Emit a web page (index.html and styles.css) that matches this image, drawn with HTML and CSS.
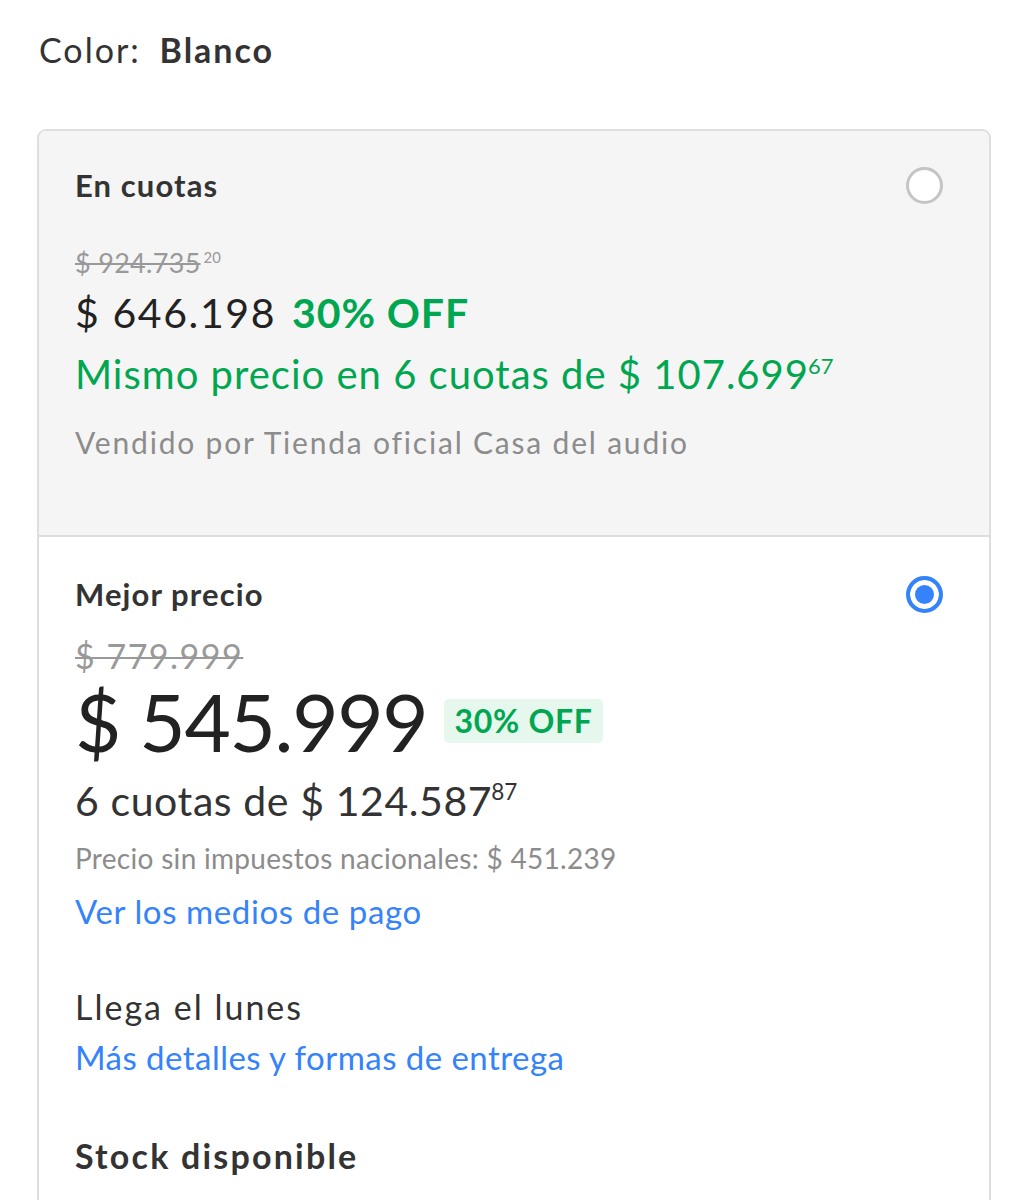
FILE: index.html
```html
<!DOCTYPE html>
<html lang="es">
  <head>
    <meta charset="UTF-8" />
    <meta name="viewport" content="width=device-width, initial-scale=1.0" />
    <title>Opciones de compra</title>
    <link rel="stylesheet" href="styles.css">
  </head>
  <body>
    <div class="page">
      <p class="color-line">Color: <strong>Blanco</strong></p>

      <div class="offers">
        <div class="offer offer-alt">
          <div class="offer-head">
            <h3>En cuotas</h3>
            <span class="radio"></span>
          </div>
          <p class="old-price small">
            <s>$ 924.735</s><sup>20</sup>
          </p>
          <p class="price-mid">
            $ 646.198<span class="off">30% OFF</span>
          </p>
          <p class="same-price">
            Mismo precio en 6 cuotas de $ 107.699<sup>67</sup>
          </p>
          <p class="seller">Vendido por Tienda oficial Casa del audio</p>
        </div>

        <div class="offer">
          <div class="offer-head">
            <h3>Mejor precio</h3>
            <span class="radio checked"></span>
          </div>
          <p class="old-price"><s>$ 779.999</s></p>
          <div class="price-big">
            <span class="amount">$ 545.999</span>
            <span class="badge">30% OFF</span>
          </div>
          <p class="installments">6 cuotas de $ 124.587<sup>87</sup></p>
          <p class="no-tax">Precio sin impuestos nacionales: $ 451.239</p>
          <a class="link" href="#">Ver los medios de pago</a>

          <div class="shipping">
            <p class="arrives">Llega el lunes</p>
            <a class="link link-wide" href="#">Más detalles y formas de entrega</a>
          </div>

          <h3 class="stock">Stock disponible</h3>
        </div>
      </div>
    </div>
  </body>
</html>
```

FILE: styles.css
```css
html {
  background-color: #ffffff;
  font-family: "Lato", "Noto Sans", sans-serif;
  color: #333333;
}

body {
  margin: 0;
  padding: 0;
  height: 1200px;
  overflow: hidden;
}

.page {
  padding: 22px 37px 0 37px;
}

p {
  margin: 0;
}

.color-line {
  font-size: 34px;
  line-height: 56px;
  letter-spacing: 2px;
  padding-left: 2px;
  color: #333333;
}

.color-line strong {
  font-weight: 700;
  margin-left: 8px;
}

.offers {
  margin-top: 51px;
  border: 2px solid #dedede;
  border-radius: 9px;
  overflow: hidden;
}

.offer {
  padding: 37px 46px 120px 36px;
  background-color: #ffffff;
}

.offer-alt {
  background-color: #f5f5f5;
  border-bottom: 2px solid #dedede;
  padding-top: 34px;
  padding-bottom: 48px;
  height: 322px;
}

.offer-head {
  display: flex;
  justify-content: space-between;
  align-items: center;
  height: 40px;
}

h3 {
  margin: 0;
  font-size: 31px;
  font-weight: 700;
  letter-spacing: 1.1px;
  color: #333333;
}

.radio {
  width: 31px;
  height: 31px;
  border: 3px solid #c4c4c4;
  border-radius: 50%;
  background-color: #ffffff;
}

.radio.checked {
  width: 29px;
  height: 29px;
  border: 4px solid #3483fa;
  background-color: #3483fa;
  box-shadow: inset 0 0 0 5px #ffffff;
}

.old-price {
  color: #999999;
  font-size: 34px;
  line-height: 40px;
  letter-spacing: 1.5px;
  margin-top: 22px;
}

.old-price.small {
  font-size: 27px;
  line-height: 36px;
  letter-spacing: 0.3px;
  margin-top: 40px;
}

.old-price s {
  text-decoration-thickness: 2px;
}

sup {
  font-size: 0.55em;
  vertical-align: 0.7em;
  line-height: 0;
  letter-spacing: 0;
  margin-left: -1px;
}

.old-price.small sup {
  margin-left: 3px;
}

.price-mid {
  font-size: 41px;
  line-height: 52px;
  letter-spacing: 1.6px;
  color: #222222;
  margin-top: 6px;
}

.off {
  color: #00a650;
  font-weight: 700;
  letter-spacing: 0.9px;
  margin-left: 16px;
}

.same-price {
  font-size: 40px;
  line-height: 52px;
  letter-spacing: 1px;
  color: #00a650;
  margin-top: 9px;
}

.seller {
  font-size: 30px;
  line-height: 40px;
  letter-spacing: 1.8px;
  color: #8c8c8c;
  margin-top: 22px;
}

.price-big {
  display: flex;
  align-items: center;
  gap: 17px;
  line-height: 82px;
  margin-top: 4px;
  color: #222222;
}

.amount {
  font-size: 80px;
  letter-spacing: -1.3px;
}

.badge {
  background-color: #e6f7ee;
  color: #00a650;
  font-size: 32px;
  font-weight: 700;
  letter-spacing: 0.7px;
  line-height: 44px;
  padding: 0 10px;
  border-radius: 5px;
}

.installments {
  font-size: 41px;
  line-height: 52px;
  letter-spacing: 0.6px;
  color: #333333;
  margin-top: 13px;
}

.no-tax {
  font-size: 28px;
  line-height: 40px;
  letter-spacing: 0.3px;
  color: #8c8c8c;
  margin-top: 11px;
}

.link {
  display: block;
  font-size: 33px;
  line-height: 52px;
  letter-spacing: 0.6px;
  color: #3483fa;
  text-decoration: none;
  margin-top: 7px;
}

.link-wide {
  margin-top: 0;
  letter-spacing: 0.45px;
}

.shipping {
  margin-top: 46px;
}

.arrives {
  font-size: 34px;
  line-height: 48px;
  letter-spacing: 2px;
  color: #333333;
}

.stock {
  margin-top: 52px;
  font-size: 34px;
  letter-spacing: 2.2px;
}
```
